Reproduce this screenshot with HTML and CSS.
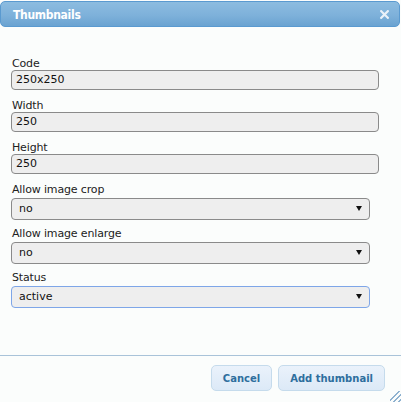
FILE: index.html
```html
<!DOCTYPE html>
<html>
<head>
<meta charset="utf-8">
<link rel="stylesheet" href="styles.css">
</head>
<body>
<div class="dialog">
  <div class="titlebar">
    <span class="title">Thumbnails</span>
    <svg class="close" width="9" height="9" viewBox="0 0 9 9"><path d="M1.2 1.2 L7.8 7.8 M7.8 1.2 L1.2 7.8" stroke="#eaf1f9" stroke-width="2.2" stroke-linecap="square"/></svg>
  </div>
  <form class="form">
    <label class="field">
      <span class="label">Code</span>
      <span class="input">250x250</span>
    </label>
    <label class="field">
      <span class="label">Width</span>
      <span class="input">250</span>
    </label>
    <label class="field">
      <span class="label">Height</span>
      <span class="input">250</span>
    </label>
    <label class="field sel">
      <span class="label">Allow image crop</span>
      <span class="select">no<span class="arrow"></span></span>
    </label>
    <label class="field sel">
      <span class="label">Allow image enlarge</span>
      <span class="select">no<span class="arrow"></span></span>
    </label>
    <label class="field sel">
      <span class="label">Status</span>
      <span class="select focus">active<span class="arrow"></span></span>
    </label>
  </form>
  <div class="footer">
    <button class="btn" type="button">Cancel</button>
    <button class="btn" type="button">Add thumbnail</button>
    <span class="grip"></span>
  </div>
</div>
</body>
</html>
```

FILE: styles.css
```css
html, body {
  margin: 0;
  padding: 0;
  background: #fbfdfc;
}
body {
  font-family: "DejaVu Sans", Verdana, sans-serif;
  font-size: 11px;
  color: #222;
  width: 401px;
  height: 402px;
  overflow: hidden;
}
.dialog {
  width: 401px;
  height: 402px;
  display: flex;
  flex-direction: column;
  position: relative;
}
.titlebar {
  margin: 1px 1px 0 0;
  height: 24px;
  border: 1px solid #5a9ad0;
  border-radius: 5px;
  background: linear-gradient(#8cbce0, #7eb1da 55%, #6aa3d1);
  display: flex;
  align-items: center;
  justify-content: space-between;
  padding: 0 10px 0 12px;
}
.title {
  color: #fff;
  font-family: "DejaVu Sans Condensed", "DejaVu Sans", sans-serif;
  font-weight: bold;
  font-size: 12px;
  letter-spacing: -0.3px;
  position: relative;
  top: 1px;
}
.close {
  display: block;
}
.form {
  display: flex;
  flex-direction: column;
  padding: 31px 0 0 11px;
}
.field {
  display: flex;
  flex-direction: column;
  margin-top: 10px;
}
.field:first-child { margin-top: 0; }
.field.sel + .field.sel { margin-top: 8px; }
.label {
  padding-left: 1px;
  line-height: 12px;
  letter-spacing: -0.15px;
}
.input, .select {
  box-sizing: border-box;
  background: #eeeeee;
  border: 1px solid #8a8a8a;
  border-radius: 4px;
  line-height: 18px;
  height: 20px;
  padding-left: 4px;
  color: #111;
}
.input { width: 368px; }
.select {
  width: 359px;
  height: 22px;
  line-height: 20px;
  padding-left: 7px;
  margin-top: 2px;
  position: relative;
}
.select.focus {
  border-color: #7ea6e8;
}
.arrow {
  position: absolute;
  right: 7px;
  top: 7px;
  width: 0;
  height: 0;
  border-left: 3px solid transparent;
  border-right: 3px solid transparent;
  border-top: 5px solid #111;
}
.footer {
  margin-top: auto;
  border-top: 1px solid #a9c3d9;
  height: 47px;
  display: flex;
  justify-content: flex-end;
  align-items: flex-start;
  padding: 9px 16px 0 0;
  gap: 6px;
  box-sizing: border-box;
  position: relative;
}
.btn {
  font-family: "DejaVu Sans", Verdana, sans-serif;
  font-size: 10px;
  font-weight: bold;
  color: #2e6e9e;
  height: 26px;
  padding: 0 11px;
  border: 1px solid #c5dbec;
  border-radius: 5px;
  background: linear-gradient(#eaf2fb, #dce9f7);
  margin: 0;
}
.grip {
  position: absolute;
  right: 0;
  bottom: 0;
  width: 11px;
  height: 11px;
  background: linear-gradient(135deg, transparent 0 40%, #8fb2d0 40% 48%, transparent 48% 62%, #8fb2d0 62% 70%, transparent 70% 84%, #8fb2d0 84% 92%, transparent 92%);
}
```
